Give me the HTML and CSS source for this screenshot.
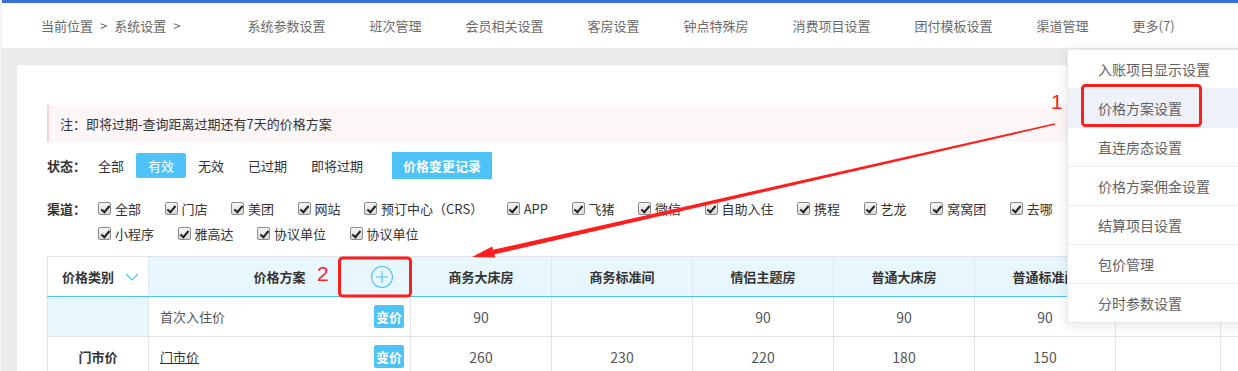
FILE: index.html
```html
<!DOCTYPE html>
<html lang="zh-CN">
<head>
  <meta charset="UTF-8" />
  <title>价格方案设置</title>
  <link rel="stylesheet" href="styles.css">
</head>
<body>
  <div class="topbar"></div>

  <header class="header">
    <div class="crumb">当前位置<span class="sep">&gt;</span>系统设置<span class="sep">&gt;</span></div>
    <nav class="nav">
      <a>系统参数设置</a>
      <a>班次管理</a>
      <a>会员相关设置</a>
      <a>客房设置</a>
      <a>钟点特殊房</a>
      <a>消费项目设置</a>
      <a>团付模板设置</a>
      <a>渠道管理</a>
      <a>更多(7)</a>
    </nav>
  </header>

  <main class="main">
    <div class="card">
      <div class="notice">注：即将过期-查询距离过期还有7天的价格方案</div>

      <div class="filter-row">
        <span class="label">状态：</span>
        <span class="opt">全部</span>
        <span class="opt active">有效</span>
        <span class="opt">无效</span>
        <span class="opt">已过期</span>
        <span class="opt">即将过期</span>
        <button class="btn-log">价格变更记录</button>
      </div>

      <div class="filter-row channels">
        <span class="label">渠道：</span>
        <div class="chk-list">
          <label class="chk"><i class="box"></i>全部</label>
          <label class="chk"><i class="box"></i>门店</label>
          <label class="chk"><i class="box"></i>美团</label>
          <label class="chk"><i class="box"></i>网站</label>
          <label class="chk"><i class="box"></i>预订中心（CRS）</label>
          <label class="chk"><i class="box"></i>APP</label>
          <label class="chk"><i class="box"></i>飞猪</label>
          <label class="chk"><i class="box"></i>微信</label>
          <label class="chk"><i class="box"></i>自助入住</label>
          <label class="chk"><i class="box"></i>携程</label>
          <label class="chk"><i class="box"></i>艺龙</label>
          <label class="chk"><i class="box"></i>窝窝团</label>
          <label class="chk"><i class="box"></i>去哪</label>
          <label class="chk"><i class="box"></i>小程序</label>
          <label class="chk"><i class="box"></i>雅高达</label>
          <label class="chk"><i class="box"></i>协议单位</label>
          <label class="chk"><i class="box"></i>协议单位</label>
        </div>
      </div>

      <table class="price-table">
        <colgroup>
          <col class="c-type"><col class="c-plan"><col class="c-room"><col class="c-room">
          <col class="c-room"><col class="c-room"><col class="c-room"><col class="c-extra"><col class="c-last">
        </colgroup>
        <thead>
          <tr>
            <th class="type-head">价格类别
              <svg class="chev" width="14" height="8" viewBox="0 0 14 8"><polyline points="1,1 7,7 13,1" fill="none" stroke="#4dc3f7" stroke-width="1.2"/></svg>
            </th>
            <th class="plan-head">价格方案
              <svg class="plus" width="24" height="24" viewBox="0 0 24 24">
                <circle cx="12" cy="12" r="10.5" fill="none" stroke="#4dc3f7" stroke-width="1.1"/>
                <path d="M12 6v12M6 12h12" stroke="#4dc3f7" stroke-width="1.1"/>
              </svg>
            </th>
            <th>商务大床房</th>
            <th>商务标准间</th>
            <th>情侣主题房</th>
            <th>普通大床房</th>
            <th>普通标准间</th>
            <th></th>
            <th></th>
          </tr>
        </thead>
        <tbody>
          <tr>
            <td class="type-cell hl"></td>
            <td class="plan-cell">
              <div class="plan-inner"><span class="plan-name">首次入住价</span><button class="btn-change">变价</button></div>
            </td>
            <td>90</td><td></td><td>90</td><td>90</td><td>90</td><td></td><td></td>
          </tr>
          <tr>
            <td class="type-cell">门市价</td>
            <td class="plan-cell">
              <div class="plan-inner"><span class="plan-name link">门市价</span><button class="btn-change">变价</button></div>
            </td>
            <td>260</td><td>230</td><td>220</td><td>180</td><td>150</td><td></td><td></td>
          </tr>
        </tbody>
      </table>
    </div>
  </main>

  <ul class="dropdown">
    <li>入账项目显示设置</li>
    <li class="hover">价格方案设置</li>
    <li>直连房态设置</li>
    <li>价格方案佣金设置</li>
    <li>结算项目设置</li>
    <li>包价管理</li>
    <li>分时参数设置</li>
  </ul>

  <!-- red annotations drawn on top of the screenshot -->
  <svg class="marks" width="1238" height="371" viewBox="0 0 1238 371">
    <rect x="1082.5" y="85.5" width="118" height="40" rx="3" fill="none" stroke="#ff1e1e" stroke-width="3"/>
    <text x="1051" y="109" class="mark-num">1</text>
    <polygon points="1055.2,124.8 494,254.4 493,249.8 1054.8,123.2" fill="#ff1e1e"/>
    <polygon points="472,257 495.2,257.4 492.2,246.6" fill="#ff1e1e"/>
    <rect x="339.5" y="258" width="71" height="38" rx="3" fill="none" stroke="#ff1e1e" stroke-width="3"/>
    <text x="317" y="281" class="mark-num">2</text>
  </svg>
</body>
</html>
```

FILE: styles.css
```css
html, body {
  margin: 0;
  overflow: hidden;
}

body {
  width: 1236px;
  height: 371px;
  position: relative;
  border-left: 2px solid #f3f3f7;
  background: #ebebeb;
  font-family: "Noto Sans CJK SC", "Liberation Sans", sans-serif;
  font-size: 13px;
  color: #333;
}

.topbar {
  height: 3px;
  background: #3571d8;
}

/* header nav */
.header {
  height: 45px;
  background: #fff;
  display: flex;
  align-items: center;
  padding-left: 39px;
  color: #666;
  line-height: 20px;
}

.crumb .sep {
  margin: 0 7px;
}

.nav {
  display: flex;
  gap: 44px;
  margin-left: 60px;
}

.nav a {
  color: #6b6b6b;
}

/* main card */
.main {
  padding: 17px 0 0 15px;
}

.card {
  background: #fff;
  padding: 40px 0 0 30px;
  height: 400px;
}

.notice {
  height: 37px;
  line-height: 37px;
  background: #fdf6f6;
  border-left: 2px solid #f1d3d8;
  padding-left: 11px;
  color: #333;
}

.filter-row {
  display: flex;
  align-items: center;
  margin-top: 10px;
  height: 27px;
  line-height: 25px;
}

.label {
  width: 39px;
  font-weight: bold;
  color: #333;
}

.opt {
  padding: 0 12px;
  height: 25px;
  color: #333;
}

.opt.active {
  background: #4dc3f7;
  color: #fff;
  border-radius: 2px;
}

.btn-log {
  margin-left: 17px;
  width: 100px;
  height: 27px;
  border: none;
  background: #4dc3f7;
  color: #fff;
  font-family: inherit;
  font-size: 13px;
  font-weight: bold;
  padding: 0;
}

.channels {
  align-items: flex-start;
  margin-top: 17px;
  height: auto;
}

.chk-list {
  display: flex;
  flex-wrap: wrap;
  width: 1000px;
  padding-left: 12px;
}

.chk {
  display: flex;
  align-items: center;
  height: 25px;
  margin-right: 23.5px;
  color: #333;
}

.box {
  width: 13px;
  height: 13px;
  box-sizing: border-box;
  border: 1px solid #8c8c8c;
  border-radius: 2px;
  background: linear-gradient(#f6f6f6, #d9d9d9);
  position: relative;
  margin-right: 4px;
}

.box::after {
  content: "";
  position: absolute;
  left: 3.5px;
  top: 0.5px;
  width: 3px;
  height: 7px;
  border: solid #222;
  border-width: 0 2px 2px 0;
  transform: rotate(40deg);
}

/* table */
.price-table {
  margin-top: 10px;
  width: 1300px;
  table-layout: fixed;
  border-collapse: collapse;
  border-top: 1px solid #dfe3e8;
}

.c-type { width: 101px; }
.c-plan { width: 262px; }
.c-room { width: 141px; }
.c-extra { width: 105px; }
.c-last { width: 127px; }

.price-table th {
  height: 39px;
  background: #e8f6fd;
  border-left: 1px solid #dde6ec;
  border-right: 1px solid #dde6ec;
  border-bottom: 1px solid #4dc3f7;
  font-weight: bold;
  color: #333;
  font-size: 13px;
  padding: 0;
}

.price-table th.type-head {
  background: #fff;
  text-align: left;
  padding-left: 14px;
}

.chev {
  margin-left: 8px;
  vertical-align: 1px;
}

.plan-head {
  position: relative;
}

.plus {
  position: absolute;
  right: 16px;
  top: 8px;
}

.price-table td {
  height: 39px;
  border: 1px solid #e3e3e3;
  text-align: center;
  font-size: 14px;
  color: #555;
  padding: 0;
}

.price-table td.type-cell {
  font-weight: bold;
  font-size: 13px;
  color: #333;
}

.price-table td.hl {
  background: #e8f6fd;
}

.price-table td.plan-cell {
  padding: 0 6px 0 11px;
}

.plan-inner {
  display: flex;
  align-items: center;
  justify-content: space-between;
}

.plan-name {
  font-size: 13px;
  color: #555;
}

.plan-name.link {
  color: #333;
  text-decoration: underline;
}

.btn-change {
  width: 30px;
  height: 23px;
  padding: 0;
  border: none;
  border-radius: 2px;
  background: #4dc3f7;
  color: #fff;
  font-family: inherit;
  font-size: 13px;
  font-weight: bold;
}

/* more menu */
.dropdown {
  position: absolute;
  top: 49px;
  left: 1065px;
  width: 190px;
  margin: 0;
  padding: 0;
  list-style: none;
  background: #fff;
  border: 1px solid #e4e7ed;
  box-shadow: 0 2px 12px rgba(0, 0, 0, 0.1);
}

.dropdown li {
  height: 38px;
  line-height: 38px;
  padding-left: 30px;
  font-size: 14px;
  color: #606266;
  border-bottom: 1px solid #ebeef5;
}

.dropdown li:last-child {
  border-bottom: none;
}

.dropdown li.hover {
  background: #eef1f8;
}

.marks {
  position: absolute;
  top: 0;
  left: -2px;
  pointer-events: none;
}

.mark-num {
  fill: #ff1e1e;
  font-family: "Liberation Sans", sans-serif;
  font-size: 21px;
}
```
